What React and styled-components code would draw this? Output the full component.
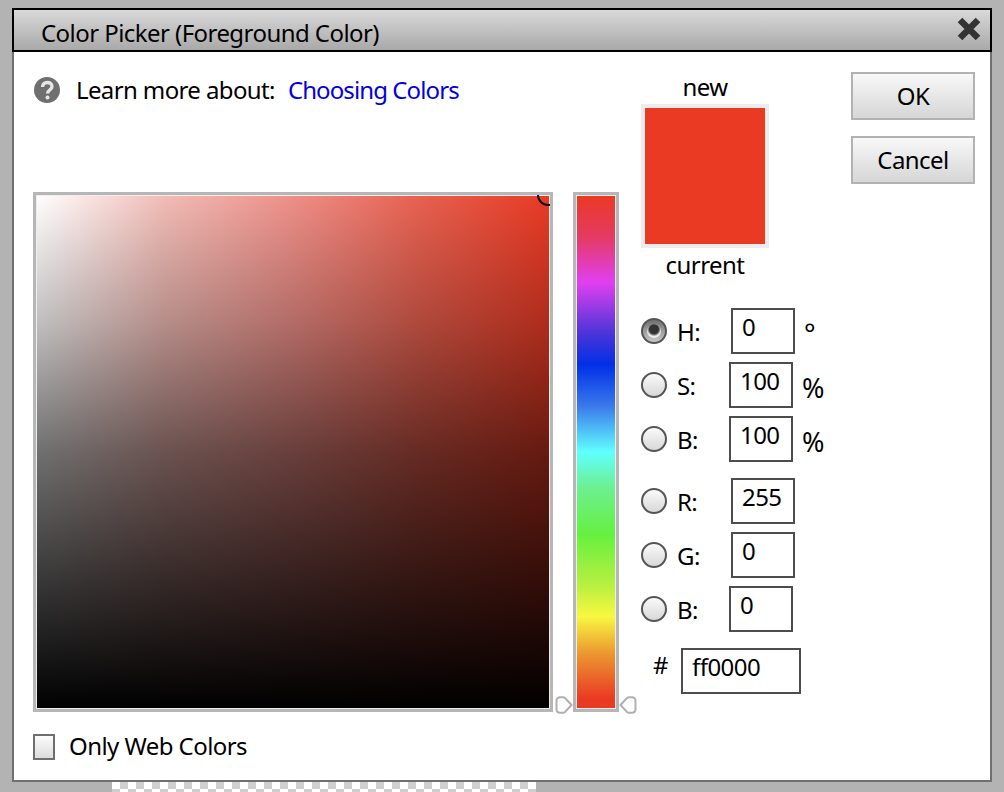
import React from 'react'
import styled, { createGlobalStyle } from 'styled-components'

const GlobalStyle = createGlobalStyle`
    html, body {
        margin: 0;
        height: 792px;
        overflow: hidden;
        background: #b3b3b3;
    }
`

const Page = styled.div`
    padding: 8px 12px 0;
    font-family: 'Noto Sans', sans-serif;
    font-size: 24px;
    letter-spacing: -0.56px;
    color: #000;
`

const Dialog = styled.div`
    width: 980px;
    height: 774px;
    display: flex;
    flex-direction: column;
    box-sizing: border-box;
`

const TitleBar = styled.div`
    height: 44px;
    flex: none;
    box-sizing: border-box;
    border: 2px solid #000;
    padding: 5px 8px 0 27px;
    display: flex;
    align-items: center;
    justify-content: space-between;
    background: linear-gradient(#d9d9d9, #a9a9a9);
    line-height: 34px;
`

const CloseButton = styled.svg`
    margin-top: -8px;
`

const Body = styled.div`
    flex: 1;
    box-sizing: border-box;
    display: flex;
    background: #fff;
    border: 2px solid #707070;
    border-top: none;
    padding: 20px 15px 0 19px;
`

const LeftColumn = styled.div`
    width: 586px;
    flex: none;
`

const HelpRow = styled.div`
    height: 36px;
    display: flex;
    align-items: center;
    gap: 16px;
    margin: 0 0 84px 1px;
    line-height: 34px;
`

const HelpText = styled.span`
    letter-spacing: ${(p) => (p.$link ? '-0.9px' : '-0.62px')};
    color: ${(p) => (p.$link ? '#0000e6' : '#000')};
    margin-left: ${(p) => (p.$link ? '-3px' : '0')};
`

const PickerRow = styled.div`
    position: relative;
    display: flex;
    gap: 20px;
`

const Field = styled.div`
    position: relative;
    overflow: hidden;
    width: 520px;
    height: 520px;
    box-sizing: border-box;
    border: 3px solid #b6b6b6;
    outline: 1px solid #eeeeee;
    outline-offset: -4px;
    background:
        linear-gradient(rgba(0, 0, 0, 0) 0%, rgba(0, 0, 0, 0.25) 25%, rgba(0, 0, 0, 0.56) 50%, rgba(0, 0, 0, 0.78) 75%, rgba(0, 0, 0, 0.91) 90%, #000 100%),
        linear-gradient(to right, #fff 0%, #f2bcb6 25%, #ee8f88 50%, #e8604f 75%, #e93a24 100%);
`

const Marker = styled.div`
    position: absolute;
    top: -11px;
    right: -9px;
    width: 18px;
    height: 18px;
    border: 2px solid #111;
    border-radius: 50%;
`

const HueBar = styled.div`
    width: 46px;
    height: 520px;
    box-sizing: border-box;
    border: 3px solid #b6b6b6;
    outline: 1px solid #eeeeee;
    outline-offset: -4px;
    background: linear-gradient(
        #ea3a24 0%,
        #e53a60 8%,
        #e040f0 17%,
        #4a34d8 27%,
        #0030e8 33%,
        #3a78ea 41%,
        #60ffff 50%,
        #6cf090 57%,
        #66f040 66%,
        #b8f040 76%,
        #f8f840 82%,
        #eb9a30 89%,
        #ea3a24 98%
    );
`

const Slider = styled.svg`
    position: absolute;
    bottom: -2px;
    left: ${(p) => p.$left}px;
`

const WebRow = styled.div`
    display: flex;
    align-items: center;
    gap: 14px;
    margin-top: 22px;
    height: 26px;
    line-height: 26px;
`

const WebLabel = styled.span`
    margin-top: -2px;
`

const Checkbox = styled.div`
    width: 22px;
    height: 26px;
    box-sizing: border-box;
    border: 2px solid #6e6e6e;
    background: linear-gradient(#fbfbfb, #dcdcdc);
`

const ValuesPanel = styled.div`
    width: 210px;
    flex: none;
    margin-left: 22px;
`

const SwatchLabel = styled.div`
    width: 128px;
    height: 32px;
    line-height: 30px;
    text-align: center;
    margin-bottom: ${(p) => p.$gap || 0}px;
`

const Swatch = styled.div`
    width: 128px;
    height: 144px;
    box-sizing: border-box;
    border: 4px solid #ececec;
    background: #ea3a24;
    margin-bottom: 2px;
`

const Row = styled.div`
    display: flex;
    align-items: center;
    height: 46px;
    margin-bottom: ${(p) => p.$after}px;
`

const Radio = styled.div`
    position: relative;
    width: 26px;
    height: 26px;
    flex: none;
    box-sizing: border-box;
    border-radius: 50%;
    border: 2px solid #555;
    background: ${(p) =>
        p.$checked
            ? 'linear-gradient(#6f6f6f, #c8c8c8)'
            : 'linear-gradient(#fafafa, #d8d8d8)'};
    ${(p) =>
        p.$checked &&
        `&::after {
            content: '';
            position: absolute;
            inset: 4px;
            border-radius: 50%;
            background: radial-gradient(circle at 50% 38%, #333 0 4.5px, #eeeeee 7px);
        }`}
`

const RowLabel = styled.span`
    width: ${(p) => 54 + (p.$shift || 0)}px;
    flex: none;
    margin-left: 10px;
    padding-top: 1px;
    box-sizing: border-box;
`

const ValueBox = styled.div`
    width: ${(p) => p.$width || 64}px;
    height: ${(p) => p.$height || 46}px;
    box-sizing: border-box;
    border: 2px solid #4d4d4d;
    padding-left: 9px;
    line-height: 34px;
`

const Unit = styled.span`
    margin-left: 9px;
    font-size: 27px;
    padding-top: ${(p) => p.$top}px;
`

const HexRow = styled.div`
    display: flex;
    height: 46px;
    padding-left: 12px;
    line-height: 34px;
`

const HexMark = styled.span`
    width: 28px;
    flex: none;
`

const ButtonColumn = styled.div`
    display: flex;
    flex-direction: column;
    gap: 16px;
`

const Button = styled.div`
    width: 124px;
    height: 48px;
    box-sizing: border-box;
    border: 2px solid #b2b2b2;
    background: linear-gradient(#f8f8f8, #d6d6d6);
    display: flex;
    align-items: center;
    justify-content: center;
    padding-bottom: 1px;
`

const Checker = styled.div`
    width: 424px;
    height: 10px;
    margin-left: 100px;
    background: repeating-conic-gradient(#cfcfcf 0 25%, #ffffff 0 50%) 0 -1px / 16px 16px;
`

const HelpIcon = () => (
    <svg width="26" height="26" viewBox="0 0 26 26">
        <circle cx="13" cy="13" r="13" fill="#6f6f6f" />
        <path d="M8.5 10c0-6 9.5-6 9.5-.5 0 3.5-4.5 3.5-4.5 7" fill="none" stroke="#e6e6e6" strokeWidth="3.4" />
        <circle cx="13.5" cy="20.5" r="2" fill="#e6e6e6" />
    </svg>
)

const CloseIcon = () => (
    <CloseButton width="26" height="26" viewBox="0 0 26 26">
        <path d="M4 4l18 18M22 4L4 22" stroke="#333" strokeWidth="6.5" />
    </CloseButton>
)

const SliderMark = ({ left, flip }) => (
    <Slider $left={left} width="18" height="18" viewBox="0 0 18 18">
        <path
            d={flip
                ? 'M1.5 9L8 2Q9 1.2 10 1.2H13Q16.5 1.2 16.5 5V13Q16.5 16.8 13 16.8H10Q9 16.8 8 16Z'
                : 'M16.5 9L10 2Q9 1.2 8 1.2H5Q1.5 1.2 1.5 5V13Q1.5 16.8 5 16.8H8Q9 16.8 10 16Z'}
            fill="#fff"
            stroke="#b0b0b0"
            strokeWidth="2"
        />
    </Slider>
)

const Value = ({ name, value, shift, unit, unitTop, after, checked }) => (
    <Row $after={after}>
        <Radio $checked={checked} />
        <RowLabel $shift={shift}>{name}</RowLabel>
        <ValueBox>{value}</ValueBox>
        {unit && <Unit $top={unitTop}>{unit}</Unit>}
    </Row>
)

const App = () => (
    <Page>
        <GlobalStyle />
        <Dialog>
            <TitleBar>
                <span>Color Picker (Foreground Color)</span>
                <CloseIcon />
            </TitleBar>
            <Body>
                <LeftColumn>
                    <HelpRow>
                        <HelpIcon />
                        <HelpText>Learn more about:</HelpText>
                        <HelpText $link>Choosing Colors</HelpText>
                    </HelpRow>
                    <PickerRow>
                        <Field>
                            <Marker />
                        </Field>
                        <HueBar />
                        <SliderMark left={522} />
                        <SliderMark left={586} flip />
                    </PickerRow>
                    <WebRow>
                        <Checkbox />
                        <WebLabel>Only Web Colors</WebLabel>
                    </WebRow>
                </LeftColumn>
                <ValuesPanel>
                    <SwatchLabel>new</SwatchLabel>
                    <Swatch />
                    <SwatchLabel $gap={26}>current</SwatchLabel>
                    <Value name="H:" value="0" shift={0} unit="°" unitTop={2} after={8} checked />
                    <Value name="S:" value="100" shift={-2} unit="%" unitTop={4} after={8} />
                    <Value name="B:" value="100" shift={-2} unit="%" unitTop={4} after={16} />
                    <Value name="R:" value="255" shift={0} after={8} />
                    <Value name="G:" value="0" shift={0} after={8} />
                    <Value name="B:" value="0" shift={-2} after={16} />
                    <HexRow>
                        <HexMark>#</HexMark>
                        <ValueBox $width={120}>ff0000</ValueBox>
                    </HexRow>
                </ValuesPanel>
                <ButtonColumn>
                    <Button>OK</Button>
                    <Button>Cancel</Button>
                </ButtonColumn>
            </Body>
        </Dialog>
        <Checker />
    </Page>
)

export default App
